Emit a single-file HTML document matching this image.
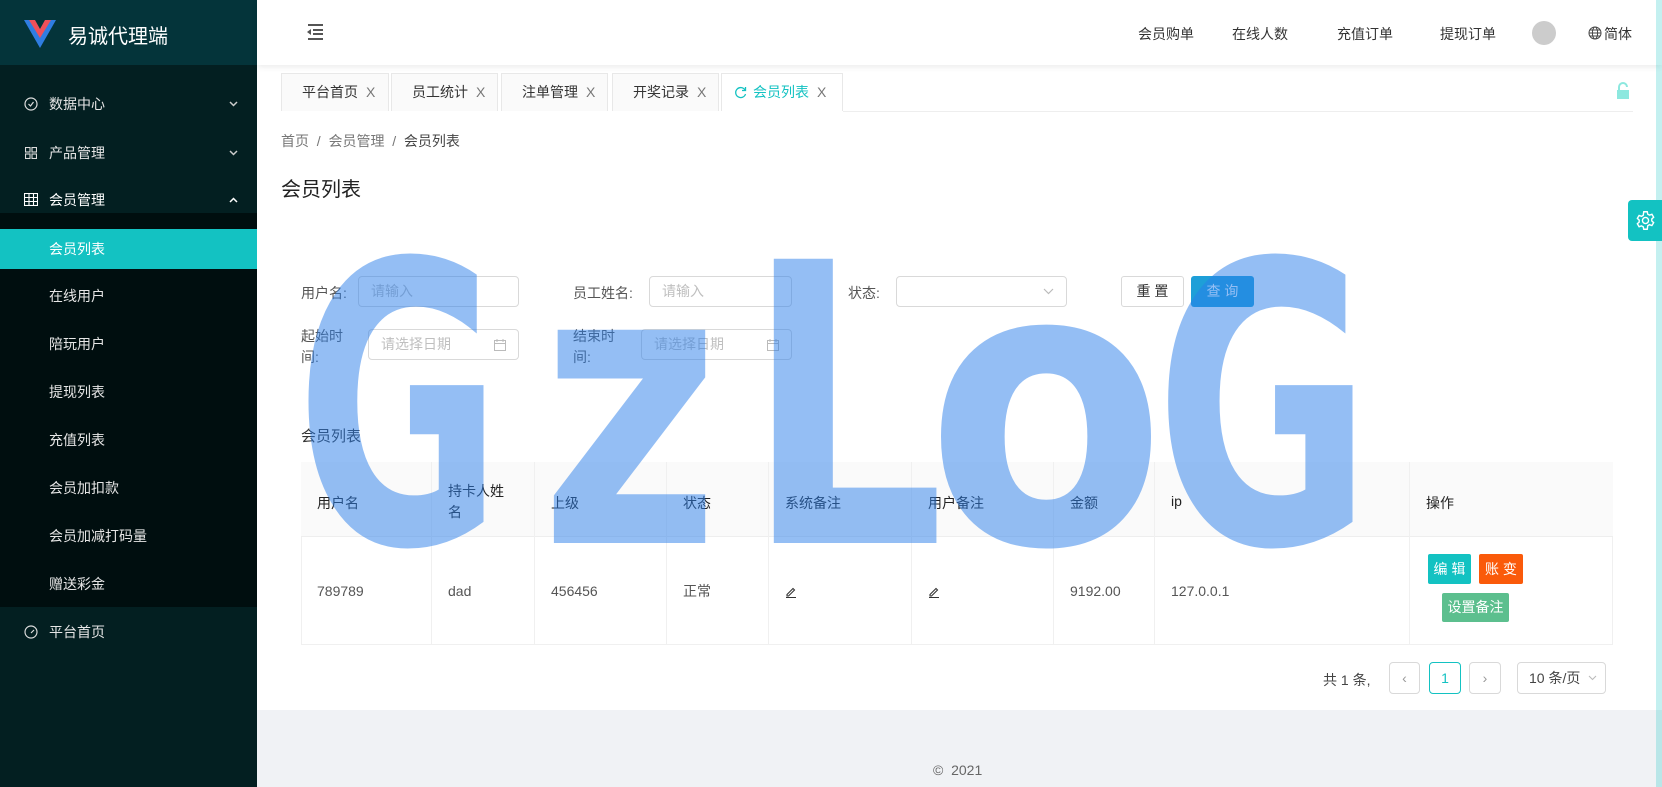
<!DOCTYPE html>
<html><head><meta charset="utf-8"><style>
*{margin:0;padding:0;box-sizing:border-box}
body{width:1662px;height:787px;overflow:hidden;font-family:"Liberation Sans","Noto Sans CJK SC",sans-serif;font-size:14px;color:#333;background:#f0f2f5;position:relative}
.abs{position:absolute}
.side{left:0;top:0;width:257px;height:787px;background:#031f21}
.logo{left:0;top:0;width:257px;height:65px;background:#04343a;color:#fff;font-size:20px}
.menu{left:0;width:257px;height:48px;line-height:48px;color:#e6e6e6;font-size:14px}
.menu svg{position:absolute}
.sub{left:0;top:213px;width:257px;height:394px;background:#000e0f}
.main{left:257px;top:0;width:1405px;height:710px;background:#fff}
.hdr{left:257px;top:0;width:1405px;height:65px;background:#fff;box-shadow:0 2px 6px rgba(0,0,0,.08)}
.tab{top:73px;height:38px;line-height:36px;border:1px solid #e8e8e8;border-bottom:none;background:#fafafa;color:#333;padding-left:20px;font-size:14px}
.tab i{font-style:normal;color:#777;margin-left:8px}
.inp{border:1px solid #d9d9d9;border-radius:4px;color:#bfbfbf;padding-left:12px;background:#fff}
.th{top:462px;height:75px;padding-top:31px;padding-left:16px;font-size:14px;color:#222;border-right:1px solid #f0f0f0}
.td{top:537px;height:108px;line-height:108px;padding-left:16px;color:#555;border-right:1px solid #f0f0f0}
.btn{color:#fff;font-size:14px;text-align:center;border-radius:2px}
.pg{top:662px;height:32px;border:1px solid #d9d9d9;border-radius:4px;text-align:center;line-height:30px;color:#999;background:#fff}
</style></head><body>
<div class="abs side"></div>
<div class="abs logo">
<svg class="abs" style="left:24px;top:20px" width="32" height="28" viewBox="0 0 32 28"><path d="M0 0h9l7 12 7-12h9L16 28z" fill="#2f7de1"/><path d="M5 0h6l5 9 5-9h6L16 18z" fill="#f0505a"/></svg>
<span class="abs" style="left:68px;top:20px">易诚代理端</span></div>
<div class="abs menu" style="top:80px"><svg style="left:24px;top:17px" width="14" height="14" viewBox="0 0 14 14"><circle cx="7" cy="7" r="6" fill="none" stroke="#ddd" stroke-width="1.2"/><path d="M4.5 7l2 2 3-4" fill="none" stroke="#ddd" stroke-width="1.2"/></svg><span class="abs" style="left:49px">数据中心</span><svg style="left:229px;top:21px" width="9" height="6" viewBox="0 0 9 6"><path d="M1 1l3.5 3.5L8 1" fill="none" stroke="#ccc" stroke-width="1.5"/></svg></div>
<div class="abs menu" style="top:129px"><svg style="left:25px;top:18px" width="12" height="12" viewBox="0 0 12 12"><g fill="none" stroke="#ddd" stroke-width="1.1"><rect x=".5" y=".5" width="4.5" height="4.5"/><rect x="7" y=".5" width="4.5" height="4.5"/><rect x=".5" y="7" width="4.5" height="4.5"/><rect x="7" y="7" width="4.5" height="4.5"/></g></svg><span class="abs" style="left:49px">产品管理</span><svg style="left:229px;top:21px" width="9" height="6" viewBox="0 0 9 6"><path d="M1 1l3.5 3.5L8 1" fill="none" stroke="#ccc" stroke-width="1.5"/></svg></div>
<div class="abs menu" style="top:176px;color:#fff"><svg style="left:24px;top:17px" width="14" height="13" viewBox="0 0 14 13"><g fill="none" stroke="#fff" stroke-width="1.1"><rect x=".5" y=".5" width="13" height="12"/><path d="M.5 4.5h13M.5 8.5h13M5 .5v12M9.5 .5v12"/></g></svg><span class="abs" style="left:49px">会员管理</span><svg style="left:229px;top:21px" width="9" height="6" viewBox="0 0 9 6"><path d="M1 5l3.5-3.5L8 5" fill="none" stroke="#fff" stroke-width="1.5"/></svg></div>
<div class="abs sub"></div>
<div class="abs menu" style="top:229px;height:40px;line-height:40px;background:#13c2c2;color:#fff"><span class="abs" style="left:49px">会员列表</span></div>
<div class="abs menu" style="top:272px"><span class="abs" style="left:49px">在线用户</span></div>
<div class="abs menu" style="top:320px"><span class="abs" style="left:49px">陪玩用户</span></div>
<div class="abs menu" style="top:368px"><span class="abs" style="left:49px">提现列表</span></div>
<div class="abs menu" style="top:416px"><span class="abs" style="left:49px">充值列表</span></div>
<div class="abs menu" style="top:464px"><span class="abs" style="left:49px">会员加扣款</span></div>
<div class="abs menu" style="top:512px"><span class="abs" style="left:49px">会员加减打码量</span></div>
<div class="abs menu" style="top:560px"><span class="abs" style="left:49px">赠送彩金</span></div>
<div class="abs menu" style="top:608px"><svg style="left:24px;top:17px" width="14" height="14" viewBox="0 0 14 14"><circle cx="7" cy="7" r="6" fill="none" stroke="#ddd" stroke-width="1.2"/><path d="M7 8l3-3" stroke="#ddd" stroke-width="1.2"/></svg><span class="abs" style="left:49px">平台首页</span></div>

<div class="abs main"></div>
<div class="abs hdr"></div>
<svg class="abs" style="left:305px;top:23px" width="20" height="18" viewBox="0 0 20 18"><path d="M3 2h15M8 7h10M8 11h10M3 16h15" stroke="#555" stroke-width="2"/><path d="M6 6l-4 3 4 3z" fill="#555"/></svg>
<span class="abs" style="left:1138px;top:24px;color:#333">会员购单</span>
<span class="abs" style="left:1232px;top:24px;color:#333">在线人数</span>
<span class="abs" style="left:1337px;top:24px;color:#333">充值订单</span>
<span class="abs" style="left:1440px;top:24px;color:#333">提现订单</span>
<div class="abs" style="left:1532px;top:21px;width:24px;height:24px;border-radius:50%;background:#ccc"></div>
<svg class="abs" style="left:1588px;top:26px" width="14" height="14" viewBox="0 0 14 14"><g fill="none" stroke="#444" stroke-width="1"><circle cx="7" cy="7" r="6"/><ellipse cx="7" cy="7" rx="2.6" ry="6"/><path d="M1 7h12M2 4h10M2 10h10"/></g></svg>
<span class="abs" style="left:1604px;top:24px;color:#333">简体</span>
<div class="abs" style="left:1656px;top:0;width:6px;height:787px;background:#13c2c2;opacity:.25"></div>

<div class="abs tab" style="left:281px;width:108px">平台首页<i>X</i></div>
<div class="abs tab" style="left:391px;width:107px">员工统计<i>X</i></div>
<div class="abs tab" style="left:501px;width:107px">注单管理<i>X</i></div>
<div class="abs tab" style="left:612px;width:107px">开奖记录<i>X</i></div>
<div class="abs tab" style="left:721px;width:122px;background:#fff;color:#13c2c2;padding-left:12px"><svg style="vertical-align:-2px;margin-right:6px" width="13" height="13" viewBox="0 0 13 13"><path d="M11 4A5 5 0 1 0 11.5 8" fill="none" stroke="#13c2c2" stroke-width="1.3"/><path d="M11.5 1v3.5H8" fill="none" stroke="#13c2c2" stroke-width="1.3"/></svg>会员列表<i>X</i></div>
<div class="abs" style="left:843px;top:111px;width:790px;height:1px;background:#eee"></div>
<svg class="abs" style="left:1616px;top:82px" width="14" height="18" viewBox="0 0 14 18"><path d="M3 8V5a4 4 0 0 1 8 0" stroke="#8de8df" stroke-width="2" fill="none"/><rect x="1" y="8" width="12" height="9" fill="#8de8df"/></svg>

<span class="abs" style="left:281px;top:131px;color:#777">首页 &nbsp;/ &nbsp;会员管理 &nbsp;/ &nbsp;<span style="color:#444">会员列表</span></span>
<span class="abs" style="left:281px;top:173px;font-size:20px;color:#222">会员列表</span>
<div class="abs" style="left:1628px;top:200px;width:34px;height:41px;background:#13c2c2;border-radius:4px 0 0 4px"><svg class="abs" style="left:7px;top:10px" width="21" height="21" viewBox="0 0 24 24"><path d="M12 8.5a3.5 3.5 0 1 0 0 7 3.5 3.5 0 0 0 0-7zM10 2h4l.6 2.8 2 1.1 2.7-1 2 3.4-2.1 1.9v2.3l2.1 1.9-2 3.4-2.7-1-2 1.1L14 22h-4l-.6-2.8-2-1.1-2.7 1-2-3.4 2.1-1.9V11.5L2.7 9.6l2-3.4 2.7 1 2-1.1z" fill="none" stroke="#fff" stroke-width="1.6"/></svg></div>

<span class="abs" style="left:301px;top:283px;color:#555">用户名:</span>
<div class="abs inp" style="left:358px;top:276px;width:161px;height:31px;line-height:29px">请输入</div>
<span class="abs" style="left:573px;top:283px;color:#555">员工姓名:</span>
<div class="abs inp" style="left:649px;top:276px;width:143px;height:31px;line-height:29px">请输入</div>
<span class="abs" style="left:848px;top:283px;color:#555">状态:</span>
<div class="abs inp" style="left:896px;top:276px;width:171px;height:31px"><svg class="abs" style="right:12px;top:11px" width="11" height="7" viewBox="0 0 11 7"><path d="M1 1l4.5 4.5L10 1" fill="none" stroke="#bbb" stroke-width="1.2"/></svg></div>
<div class="abs" style="left:1121px;top:276px;width:63px;height:31px;border:1px solid #d9d9d9;border-radius:3px;text-align:center;line-height:29px;color:#333">重 置</div>
<div class="abs btn" style="left:1191px;top:276px;width:63px;height:31px;line-height:31px;background:#1e9fd8;border-radius:3px">查 询</div>
<span class="abs" style="left:301px;top:326px;color:#555;line-height:21px">起始时<br>间:</span>
<div class="abs inp" style="left:368px;top:329px;width:151px;height:31px;line-height:29px">请选择日期<svg class="abs" style="right:12px;top:9px" width="12" height="12" viewBox="0 0 12 12"><g fill="none" stroke="#bbb"><rect x=".5" y="1.5" width="11" height="10"/><path d="M.5 4.5h11M3 0v3M9 0v3"/></g></svg></div>
<span class="abs" style="left:573px;top:326px;color:#555;line-height:21px">结束时<br>间:</span>
<div class="abs inp" style="left:641px;top:329px;width:151px;height:31px;line-height:29px">请选择日期<svg class="abs" style="right:12px;top:9px" width="12" height="12" viewBox="0 0 12 12"><g fill="none" stroke="#bbb"><rect x=".5" y="1.5" width="11" height="10"/><path d="M.5 4.5h11M3 0v3M9 0v3"/></g></svg></div>

<span class="abs" style="left:301px;top:425px;font-size:15px;color:#333">会员列表</span>
<div class="abs" style="left:301px;top:462px;width:1312px;height:183px;border:1px solid #f0f0f0"></div>
<div class="abs" style="left:301px;top:462px;width:1312px;height:75px;background:#fafafa;border-bottom:1px solid #eee"></div>
<div class="abs th" style="left:301px;width:131px">用户名</div>
<div class="abs th" style="left:432px;width:103px;padding-top:19px;line-height:21px">持卡人姓<br>名</div>
<div class="abs th" style="left:535px;width:132px">上级</div>
<div class="abs th" style="left:667px;width:102px">状态</div>
<div class="abs th" style="left:769px;width:143px">系统备注</div>
<div class="abs th" style="left:912px;width:142px">用户备注</div>
<div class="abs th" style="left:1054px;width:101px">金额</div>
<div class="abs th" style="left:1155px;width:255px">ip</div>
<div class="abs th" style="left:1410px;width:203px;border:none">操作</div>
<div class="abs td" style="left:301px;width:131px">789789</div>
<div class="abs td" style="left:432px;width:103px">dad</div>
<div class="abs td" style="left:535px;width:132px">456456</div>
<div class="abs td" style="left:667px;width:102px">正常</div>
<div class="abs td" style="left:769px;width:143px"><svg style="vertical-align:middle" width="12" height="12" viewBox="0 0 12 12"><path d="M2 8.5L8 2.5l1.5 1.5-6 6H2zM1 11.5h10" fill="none" stroke="#333" stroke-width="1.1"/></svg></div>
<div class="abs td" style="left:912px;width:142px"><svg style="vertical-align:middle" width="12" height="12" viewBox="0 0 12 12"><path d="M2 8.5L8 2.5l1.5 1.5-6 6H2zM1 11.5h10" fill="none" stroke="#333" stroke-width="1.1"/></svg></div>
<div class="abs td" style="left:1054px;width:101px">9192.00</div>
<div class="abs td" style="left:1155px;width:255px">127.0.0.1</div>
<div class="abs btn" style="left:1428px;top:554px;width:43px;height:30px;line-height:30px;background:#13c2c2">编 辑</div>
<div class="abs btn" style="left:1479px;top:554px;width:44px;height:30px;line-height:30px;background:#fa5a0a">账 变</div>
<div class="abs btn" style="left:1442px;top:593px;width:67px;height:29px;line-height:29px;background:#5cbf8e">设置备注</div>

<span class="abs" style="left:1323px;top:670px;color:#444">共 1 条,</span>
<div class="abs pg" style="left:1389px;width:31px">‹</div>
<div class="abs pg" style="left:1429px;width:32px;border-color:#13c2c2;color:#13c2c2">1</div>
<div class="abs pg" style="left:1469px;width:32px">›</div>
<div class="abs pg" style="left:1517px;width:89px;color:#444;text-align:left;padding-left:11px">10 条/页<svg class="abs" style="right:8px;top:12px" width="9" height="6" viewBox="0 0 9 6"><path d="M1 1l3.5 3.5L8 1" fill="none" stroke="#bbb" stroke-width="1.1"/></svg></div>

<span class="abs" style="left:933px;top:762px;color:#666">© &nbsp;2021</span>

<svg class="abs" style="left:0;top:0;pointer-events:none" width="1662" height="787">
<g fill="#2a7de9" fill-opacity="0.5" font-family="DejaVu Sans" font-weight="bold" font-size="390">
<text x="296" y="543" textLength="206" lengthAdjust="spacingAndGlyphs">G</text>
<text x="540" y="543" textLength="180" lengthAdjust="spacingAndGlyphs">z</text>
<text x="745" y="543" textLength="200" lengthAdjust="spacingAndGlyphs">L</text>
<text x="926" y="543" textLength="240" lengthAdjust="spacingAndGlyphs">o</text>
<text x="1155" y="543" textLength="217" lengthAdjust="spacingAndGlyphs">G</text>
</g></svg>
</body></html>
